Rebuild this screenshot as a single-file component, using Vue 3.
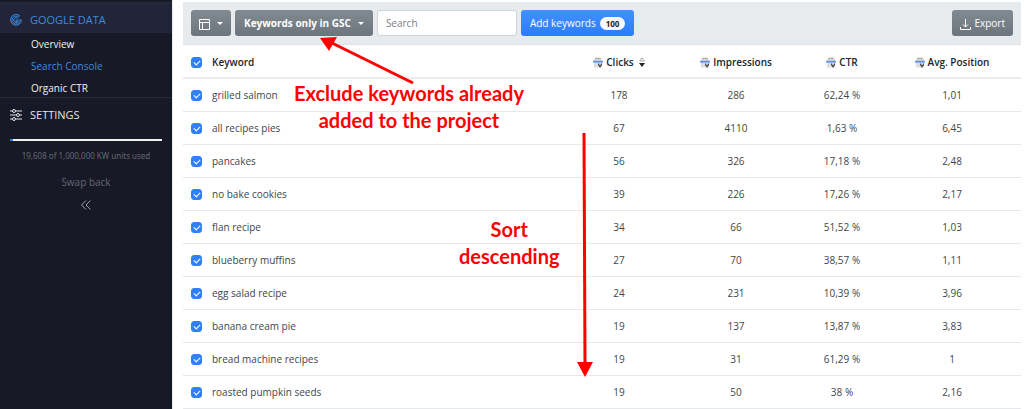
<template>
  <div class="layout">
    <aside class="sidebar">
      <nav>
        <a href="#google-data" class="section active">
          <svg class="section-icon" viewBox="0 0 12 12">
            <path d="M10 2.2A5.4 5.4 0 1 0 11.4 6H6.4M9 3.4A4 4 0 1 0 9.8 7.4M7.6 4A2.5 2.5 0 1 0 8.2 7.6H6M6 6v1.6" />
          </svg>
          GOOGLE DATA
        </a>
        <ul class="subnav">
          <li v-for="link in links" :key="link.label">
            <a :href="link.href" :class="{ current: link.current }">{{ link.label }}</a>
          </li>
        </ul>
        <a href="#settings" class="section settings">
          <svg class="section-icon" viewBox="0 0 12 12">
            <path d="M0 2h2.500M5.500 2H12M0 6h6.500M9.500 6H12M0 10h2.500M5.500 10H12" />
            <circle cx="4" cy="2" r="1.500" />
            <circle cx="8" cy="6" r="1.500" />
            <circle cx="4" cy="10" r="1.500" />
          </svg>
          SETTINGS
        </a>
      </nav>
      <div class="usage">
        <div class="usage-bar">
          <div class="usage-fill" :style="{ width: usagePercent + '%' }"></div>
        </div>
        <p class="usage-text">19,608 of 1,000,000 KW units used</p>
      </div>
      <button type="button" class="swap">Swap back</button>
      <button type="button" class="collapse" aria-label="Collapse sidebar">
        <svg viewBox="0 0 10 10"><path d="M5 .5.500 5 5 9.500M9.500.500 5 5l4.500 4.500" /></svg>
      </button>
    </aside>

    <main class="content">
      <div class="toolbar">
        <button type="button" class="btn btn-grey" aria-label="Columns">
          <svg class="grid-icon" viewBox="0 0 11 11">
            <path d="M.5.5h10v10H.5zM.5 3.500h10M3.500 3.500v7" />
          </svg>
          <span class="caret"></span>
        </button>
        <button type="button" class="btn btn-grey filter">
          Keywords only in GSC <span class="caret"></span>
        </button>
        <input v-model="search" class="search" type="text" placeholder="Search" aria-label="Search" />
        <button type="button" class="btn btn-blue">
          Add keywords <span class="badge">100</span>
        </button>
        <button type="button" class="btn btn-grey export">
          <svg class="export-icon" viewBox="0 0 11 11">
            <path d="M.5 8v2.500h10V8M5.500 0v8M3 5.500 5.500 8 8 5.500" />
          </svg>
          Export
        </button>
      </div>

      <table class="keywords">
        <thead>
          <tr>
            <th class="col-check"><input v-model="allChecked" type="checkbox" aria-label="Select all" /></th>
            <th class="col-keyword">Keyword</th>
            <th v-for="col in columns" :key="col.key" :class="'col-' + col.key">
              <span class="heading">
                <svg class="gsc-icon" viewBox="0 0 11 11">
                  <path d="M3 2V.8h5V2" fill="none" stroke="#8d8d8d" />
                  <path d="M1.500 2h8L11 4H0z" fill="#c9c9c9" />
                  <path d="M1 5h9v6H1z" fill="#dedede" />
                  <path d="M0 4h11v1.500H0z" fill="#4285f4" />
                  <path d="M5.500 6.500v2L7 10v1h1.500v-1L10 8.500v-2H8.800V8H6.700V6.500z" fill="#4c4c4c" />
                </svg>
                {{ col.label }}
                <svg v-if="col.sorted" class="sort-icon" viewBox="0 0 6 10">
                  <path d="M3 .8 5.300 4H.7z" fill="none" stroke="#888" stroke-width=".7" />
                  <path d="M0 6h6L3 10z" fill="#212529" />
                </svg>
              </span>
            </th>
          </tr>
        </thead>
        <tbody>
          <tr v-for="row in rows" :key="row.keyword">
            <td class="col-check"><input v-model="row.checked" type="checkbox" :aria-label="row.keyword" /></td>
            <td class="col-keyword">{{ row.keyword }}</td>
            <td>{{ row.clicks }}</td>
            <td>{{ row.impressions }}</td>
            <td>{{ row.ctr }}</td>
            <td>{{ row.position }}</td>
          </tr>
        </tbody>
      </table>

      <p class="note note-exclude">Exclude keywords already<br />added to the project</p>
      <p class="note note-sort">Sort<br />descending</p>
      <svg class="arrow arrow-exclude" viewBox="0 0 94 48">
        <path d="M93 46 12 6" stroke="#f00" stroke-width="3" />
        <path d="M0 1 17 0 9 14z" fill="#f00" />
      </svg>
      <svg class="arrow arrow-sort" viewBox="0 0 16 244">
        <path d="M7 0 8 230" stroke="#f00" stroke-width="3" />
        <path d="M0 229h16L8 244z" fill="#f00" />
      </svg>
    </main>
  </div>
</template>

<script setup>
import { computed, ref } from 'vue'

const search = ref('')

const links = [
  { label: 'Overview', href: '#overview' },
  { label: 'Search Console', href: '#search-console', current: true },
  { label: 'Organic CTR', href: '#organic-ctr' }
]

const usagePercent = computed(() => (19608 / 1000000) * 100)

const columns = [
  { key: 'clicks', label: 'Clicks', sorted: true },
  { key: 'impressions', label: 'Impressions' },
  { key: 'ctr', label: 'CTR' },
  { key: 'position', label: 'Avg. Position' }
]

const rows = ref([
  { keyword: 'grilled salmon', clicks: 178, impressions: 286, ctr: '62,24 %', position: '1,01', checked: true },
  { keyword: 'all recipes pies', clicks: 67, impressions: 4110, ctr: '1,63 %', position: '6,45', checked: true },
  { keyword: 'pancakes', clicks: 56, impressions: 326, ctr: '17,18 %', position: '2,48', checked: true },
  { keyword: 'no bake cookies', clicks: 39, impressions: 226, ctr: '17,26 %', position: '2,17', checked: true },
  { keyword: 'flan recipe', clicks: 34, impressions: 66, ctr: '51,52 %', position: '1,03', checked: true },
  { keyword: 'blueberry muffins', clicks: 27, impressions: 70, ctr: '38,57 %', position: '1,11', checked: true },
  { keyword: 'egg salad recipe', clicks: 24, impressions: 231, ctr: '10,39 %', position: '3,96', checked: true },
  { keyword: 'banana cream pie', clicks: 19, impressions: 137, ctr: '13,87 %', position: '3,83', checked: true },
  { keyword: 'bread machine recipes', clicks: 19, impressions: 31, ctr: '61,29 %', position: '1', checked: true },
  { keyword: 'roasted pumpkin seeds', clicks: 19, impressions: 50, ctr: '38 %', position: '2,16', checked: true }
])

const allChecked = computed({
  get: () => rows.value.every((row) => row.checked),
  set: (value) => rows.value.forEach((row) => { row.checked = value })
})
</script>

<style>
body {
  margin: 0;
  background: #fff;
}
</style>

<style scoped>
.layout {
  display: flex;
  min-height: 100vh;
  font-family: "Open Sans", "Noto Sans", sans-serif;
  font-size: 10px;
  line-height: 16px;
  color: #40464c;
}
.layout *,
.layout {
  box-sizing: border-box;
}
button,
input {
  font: inherit;
}
svg {
  display: block;
  flex: none;
}
a {
  text-decoration: none;
}

/* Sidebar */
.sidebar {
  display: flex;
  flex-direction: column;
  align-items: center;
  flex: 0 0 172px;
  padding-top: 2px;
  background: #171926;
}
nav {
  width: 100%;
}
.section {
  display: flex;
  align-items: center;
  gap: 8px;
  height: 31px;
  padding: 3px 10px 0;
  border-top: 1px solid #292b38;
  font-size: 11px;
  color: #e6e6ea;
}
.active {
  background: #222439;
  color: #3d8bdf;
}
.section-icon {
  width: 12px;
  height: 12px;
  fill: none;
  stroke: currentColor;
  stroke-width: 1;
}
.subnav {
  display: flex;
  flex-direction: column;
  gap: 6px;
  margin: 0;
  padding: 3px 0 1px 31px;
  list-style: none;
}
.subnav a {
  display: block;
  color: #f1f1f3;
}
.subnav .current {
  color: #3d8bdf;
}
.usage {
  width: 100%;
  padding: 11px 10px 0;
}
.usage-bar {
  height: 2px;
  background: #f1f1f3;
}
.usage-fill {
  height: 100%;
  background: #2f80ed;
}
.usage-text {
  margin: 7px 0 0;
  font-family: "Noto Sans", sans-serif;
  font-size: 8px;
  text-align: center;
  white-space: nowrap;
  color: #656771;
}
.swap,
.collapse {
  padding: 0;
  border: 0;
  background: none;
  color: #656771;
}
.swap {
  margin-top: 10px;
}
.collapse {
  margin-top: 10px;
  color: #a0a2aa;
}
.collapse svg {
  width: 10px;
  height: 10px;
  fill: none;
  stroke: currentColor;
}

/* Content */
.content {
  position: relative;
  flex: 1;
  min-width: 0;
  padding: 2px 3px 0 10px;
  border-left: 1px solid #e6e8ea;
}
.toolbar {
  display: flex;
  align-items: center;
  gap: 4px;
  height: 43px;
  padding: 0 8px;
  background: #e7ebee;
  border-bottom: 1px solid #dfe3e6;
}
.btn {
  display: flex;
  align-items: center;
  height: 26px;
  padding: 0 8px;
  border: 0;
  border-radius: 3px;
  color: #fff;
  white-space: nowrap;
}
.btn-grey {
  background: linear-gradient(#828a91, #6c757d);
}
.btn-blue {
  gap: 4px;
  padding: 0 9px;
  background: linear-gradient(#3f92ff, #2c7cfb);
}
.filter {
  padding: 0 9px;
  font-weight: bold;
}
.caret {
  margin-left: 7px;
  border: 3px solid transparent;
  border-top-color: #fff;
  border-bottom: 0;
}
.grid-icon,
.export-icon {
  width: 11px;
  height: 11px;
  margin-top: 3px;
  fill: none;
  stroke: #fff;
  stroke-width: 1;
}
.export {
  gap: 3px;
  margin-left: auto;
}
.search {
  width: 140px;
  height: 26px;
  padding: 0 8px;
  border: 1px solid #ced4da;
  border-radius: 3px;
  background: #fff;
  color: #40464c;
}
.search::placeholder {
  color: #7a8188;
}
.badge {
  padding: 0 6px;
  border-radius: 7px;
  background: #f8f9fa;
  font-size: 8px;
  font-weight: bold;
  line-height: 13px;
  color: #212529;
}

.keywords {
  width: 100%;
  border-collapse: separate;
  border-spacing: 0;
  table-layout: fixed;
}
.keywords th,
.keywords td {
  height: 33px;
  padding: 0;
  border-bottom: 1px solid #e6e8eb;
  text-align: center;
  vertical-align: middle;
  white-space: nowrap;
}
.keywords th {
  height: 34px;
  padding-top: 2px;
  border-bottom: 2px solid #e9ebed;
  font-weight: 600;
  color: #212529;
}
.keywords .col-check {
  width: 29px;
  padding-left: 8px;
  text-align: left;
}
.keywords .col-keyword {
  text-align: left;
}
.col-clicks {
  width: 104px;
}
.col-impressions {
  width: 130px;
}
.col-ctr {
  width: 82px;
}
.col-position {
  width: 138px;
}
.heading {
  display: flex;
  align-items: center;
  justify-content: center;
  gap: 3px;
}
.gsc-icon {
  width: 10px;
  height: 11px;
}
.sort-icon {
  width: 6px;
  height: 10px;
  margin-left: 2px;
}
input[type="checkbox"] {
  display: block;
  width: 11px;
  height: 11px;
  margin: 0;
  border-radius: 3px;
  appearance: none;
  border: 1px solid #adb5bd;
}
input[type="checkbox"]:checked {
  border-color: #2f80fa;
  background: #2f80fa;
}
input[type="checkbox"]:checked::after {
  content: "";
  display: block;
  width: 5px;
  height: 3px;
  margin: 2px;
  border: solid #fff;
  border-width: 0 0 1px 1px;
  transform: rotate(-45deg);
}

/* Callouts over the table */
.note {
  position: absolute;
  margin: 0;
  font-family: Lato, sans-serif;
  font-size: 20px;
  font-weight: bold;
  line-height: 27px;
  text-align: center;
  white-space: nowrap;
  color: #f00;
}
.note-exclude {
  top: 80px;
  left: 121px;
}
.note-sort {
  top: 216px;
  left: 286px;
}
.arrow {
  position: absolute;
}
.arrow-exclude {
  top: 37px;
  left: 147px;
  width: 94px;
  height: 48px;
}
.arrow-sort {
  top: 133px;
  left: 404px;
  width: 16px;
  height: 244px;
}
</style>
